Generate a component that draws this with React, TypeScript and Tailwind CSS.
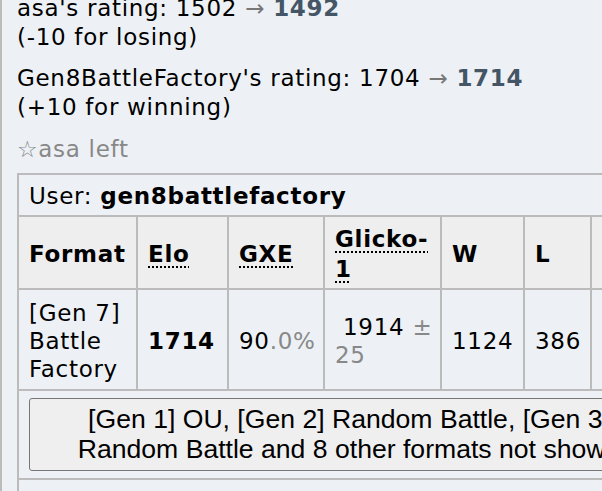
import React from "react";

const dotted = "underline decoration-dotted decoration-[1.5px] underline-offset-[5px]";
const cell = "border-2 border-[#bbbbbb] px-[10px]";

export default function App() {
  return (
    <div className="w-[602px] h-[491px] overflow-hidden bg-[#edf1f5] border-l-2 border-[#bbbbbb] font-['DejaVu_Sans',sans-serif] text-[23px] leading-[29px] tracking-[0.7px] text-black">
      <div className="-mt-[6px] pl-[15px]">
        <div className="pb-[12px]">
          asa's rating: 1502 <span className="text-[#777]">→</span>{" "}
          <strong className="text-[#445566]">1492</strong>
          <br />
          (-10 for losing)
        </div>
        <div className="pb-[13px]">
          Gen8BattleFactory's rating: 1704 <span className="text-[#777]">→</span>{" "}
          <strong className="text-[#445566]">1714</strong>
          <br />
          (+10 for winning)
        </div>
        <div className="text-[#888] pb-[9px]">☆asa left</div>
        <table className="table-fixed border-collapse w-[664px] border-2 border-[#bbbbbb]">
          <colgroup>
            <col className="w-[119px]" />
            <col className="w-[91px]" />
            <col className="w-[96px]" />
            <col className="w-[117px]" />
            <col className="w-[83px]" />
            <col className="w-[67px]" />
            <col className="w-[91px]" />
          </colgroup>
          <tbody>
            <tr className="h-[42px]">
              <td colSpan={7} className={`${cell} pt-[2px]`}>
                User: <strong>gen8battlefactory</strong>
              </td>
            </tr>
            <tr className="h-[73px] bg-[#eeeeee] text-left leading-[30px]">
              <th className={`${cell} font-bold pt-[2px]`}>Format</th>
              <th className={`${cell} font-bold pt-[2px]`}>
                <span className={dotted}>Elo</span>
              </th>
              <th className={`${cell} font-bold pt-[2px]`}>
                <span className={dotted}>GXE</span>
              </th>
              <th className={`${cell} font-bold pt-[2px]`}>
                <span className={dotted}>Glicko-1</span>
              </th>
              <th className={`${cell} font-bold pt-[2px]`}>W</th>
              <th className={`${cell} font-bold pt-[2px]`}>L</th>
              <th className={`${cell} font-bold pt-[2px]`}>Total</th>
            </tr>
            <tr className="h-[101px] leading-[28px]">
              <td className={`${cell} pt-[2px]`}>[Gen 7] Battle Factory</td>
              <td className={`${cell} font-bold pt-[2px]`}>1714</td>
              <td className={`${cell} pt-[2px]`}>
                90<span className="text-[#888]">.0%</span>
              </td>
              <td className={`${cell} pt-[2px] whitespace-nowrap`}>
                {"\u00a0"}1914 <span className="text-[#888]">±</span>
                <br />
                <span className="text-[#888]">25</span>
              </td>
              <td className={`${cell} pt-[2px]`}>1124</td>
              <td className={`${cell} pt-[2px]`}>386</td>
              <td className={`${cell} pt-[2px]`}>1510</td>
            </tr>
            <tr>
              <td colSpan={7} className={`${cell} py-[7px]`}>
                <button className="w-[640px] block bg-[#efefef] border border-[#767676] rounded-[3px] px-[12px] pt-[5px] pb-[6px] font-['Liberation_Sans',Arial,sans-serif] text-[26.6px] leading-[30px] tracking-normal text-center text-black">
                  [Gen 1] OU, [Gen 2] Random Battle, [Gen 3] Random Battle and 8 other formats not shown
                </button>
              </td>
            </tr>
            <tr className="h-[40px]">
              <td colSpan={7} className="border-2 border-[#bbbbbb]"></td>
            </tr>
          </tbody>
        </table>
      </div>
    </div>
  );
}
